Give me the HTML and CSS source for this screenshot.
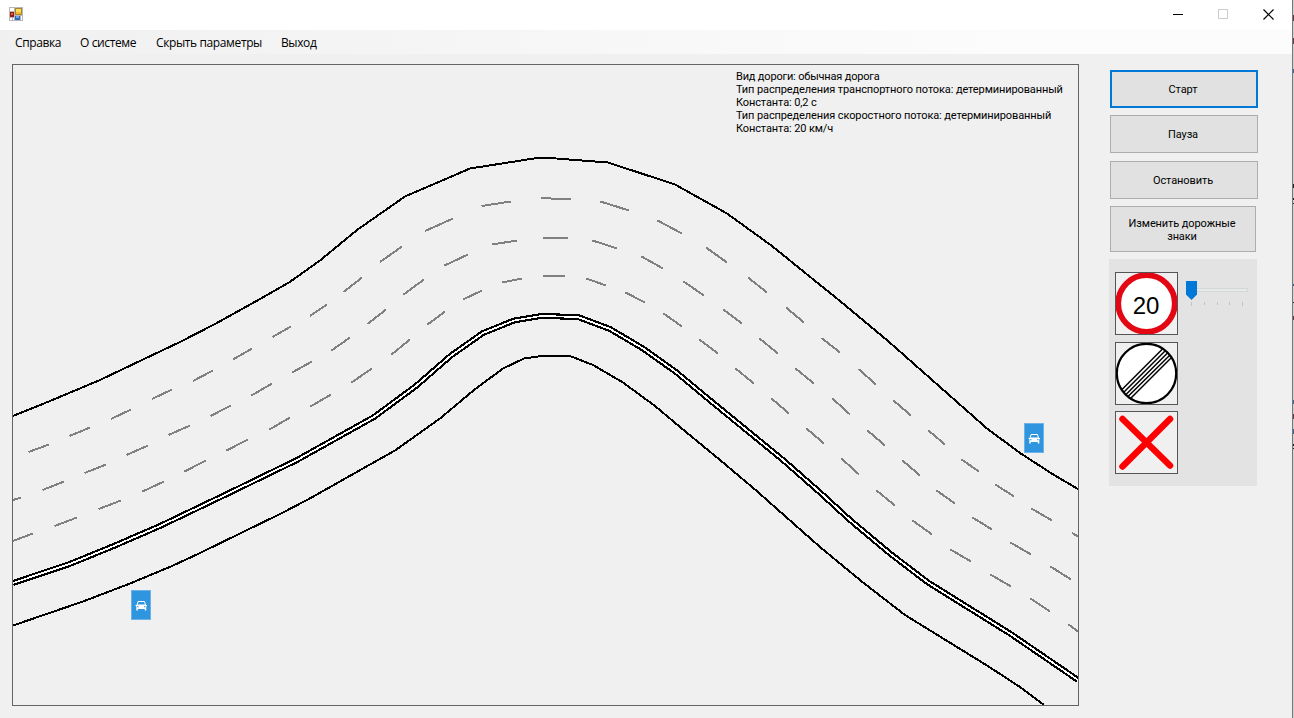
FILE: index.html
```
<!DOCTYPE html>
<html lang="ru">
<head>
<meta charset="utf-8">
<title>Моделирование движения</title>
<link rel="stylesheet" href="styles.css">
</head>
<body>
<div class="desktop">
<div class="window">
  <header class="titlebar">
    <svg class="app-icon" width="14" height="14" viewBox="0 0 14 14">
      <path fill="#b8b8b8" d="M0 0h14v14H0z"/><path fill="#fff" d="M1 1h4v3H1zM1 11h2v2H1zM4 11h1v2H4zM12 9h1v4h-1z"/>
      <path fill="#a88532" d="M6 1h7v7H6z"/><path fill="#ffdc58" d="M7 2h5v5H7z"/><path fill="#f4bb25" d="M7 5h5v2H7z"/>
      <path fill="#951d13" d="M1 5h4v5H1z"/><path fill="#e55a45" d="M2 6h2v2H2z"/>
      <path fill="#3468b9" d="M6 9h5v4H6z"/><path fill="#70a7ed" d="M7 9h3v2H7z"/>
    </svg>
    <div class="controls">
      <svg width="10" height="10" shape-rendering="crispEdges"><path d="M0 5.5h10" stroke="#000"/></svg>
      <svg width="10" height="10" shape-rendering="crispEdges"><path d="M.5.5h9v9h-9z" fill="none" stroke="#ccc"/></svg>
      <svg width="11" height="11"><path d="M.5.5l10 10M10.500.500l-10 10" stroke="#000" stroke-width="1.2"/></svg>
    </div>
  </header>
  <nav class="menu">
    <span class="m1">Справка</span><span class="m2">О системе</span><span class="m3">Скрыть параметры</span><span class="m4">Выход</span>
  </nav>
  <main class="content">
    <section class="scene">
      <svg class="road" width="1065" height="640" viewBox="13 65 1065 640" fill="none" stroke-width="2" shape-rendering="crispEdges">
        <g stroke="#000">
          <path d="M13 416L50 401 100 380 143 359.500 180 342 215 324 260 299 289 282.500 320 260.500 357 230 405 196.500 470 168.500 537 158 550 158 608 162.500 675 184.500 727 213.500 772 246 809 276 840 301 888 341 987 428.500 1020 453 1054 475 1078 489"/>
          <path d="M13 625.500L83 601.500 130 583.500 172 566 200 553 280 514 308 499.500 378 460 395 450.500 440 418.500 474 390 503 368.500 524 358.500 541 356 570 356 593 365 623 382.500 655 406 686 432 720 460 755 489.500 820 547 863 582.500 905 615 987 665.500 1020 687 1044 705"/>
          <path stroke-width="6" d="M13 583L71 563.500 115 545.500 160 526 228 493.500 297 460 374 417 416 386 451 355.500 483 333 514 320.500 541 316 578 317 610 329 643 348.500 676 372 709 399.500 783 460 820 492.500 850 520 890 553.500 928 582.500 1010 633.500 1078 680"/>
          <path stroke="#fff" stroke-width="1.800" d="M13 583L71 563.500 115 545.500 160 526 228 493.500 297 460 374 417 416 386 451 355.500 483 333 514 320.500 541 316 578 317 610 329 643 348.500 676 372 709 399.500 783 460 820 492.500 850 520 890 553.500 928 582.500 1010 633.500 1078 680"/>
        </g>
        <g stroke="#808080">
          <path d="M28.500 452L49 444.500M69.500 436L90 427.500M111 419L131 409.500M152 399L172 389.500M193 381L213 370.500M233 359.500L252 348.500M272.500 337L291 326.500M310 316L327 304.500M343.500 292L362 277.500M380 262L402 246.500M425 231L453 218.500M481.500 206L511 201.500M541 198L571 199.500M600.500 201.500L629 210.500M657.500 220.500L682 233.500M706 247.500L727 262.500M748 277.500L767 292.500M786 307.500L804 322.500M821.500 338L840 352.500M858.500 369L876 384.500M893.500 400.500L911 415.500M928.500 430.500L945 444.500M961.500 459.500L979 471.500M995.500 484.500L1014 496.500M1031.500 508.500L1052 520.500M1072 533L1078 536.500"/>
          <path d="M13 500L21 497.500M42.500 490L64 481.500M84.500 473L106 464.500M126.500 455L148 445.500M168.500 435L190 425.500M210.500 416L231 405.500M251.500 395.500L272 383.500M292 372.500L312 361.500M331.500 350.500L350 337.500M367.500 324L386 309.500M403.500 294.500L424 279.500M444.500 265.500L468 254.500M492 244.500L517 240.500M542.500 238L568 238M592.500 240.500L617 248.500M641.500 256.500L663 268.500M683.500 281.500L704 295.500M723.500 309.500L742 323.500M759.500 338.500L778 353.500M795.500 368.500L814 383.500M832.500 398.500L850 414.500M867.500 430.500L885 445.500M902.500 460.500L920 475.500M936.500 490.500L955 503.500M972.500 517.500L992 529.500M1010.500 542.500L1031 554.500M1050.500 566.500L1071 579.500"/>
          <path d="M13 541L33 533.500M54.500 526L77 517.500M98.500 509L121 500.500M142.500 491.500L164 481.500M184.500 471.500L206 460.500M226.500 450.500L248 439.500M269.500 429.500L290 417.500M310.500 406.500L331 394.500M351.500 382.500L372 368.500M391.500 354.500L410 339.500M427.500 324.500L445 311.500M463 299.500L482 290.500M502 282.500L522 278.500M542.500 276L565 276M586.500 278.500L606 285.500M625.500 292.500L645 302.500M663.500 313.500L682 326.500M699.500 339.500L718 353.500M735.500 368.500L754 383.500M771.500 398.500L789 413.500M806.500 428.500L824 443.500M841.500 458.500L859 474.500M876.500 490.500L895 505.500M912.500 520.500L932 534.500M950.500 549.500L971 561.500M990.500 574.500L1011 586.500M1030.500 598.500L1050 611.500M1068.500 624.500L1078 631.500"/>
        </g>
        <defs>
          <g id="car" shape-rendering="auto">
            <path fill="#7db9e8" d="M0 0h20v30H0z"/><path fill="#3095df" d="M.8.8h18.400v28.400H.8z"/>
            <path stroke="#fff" stroke-width="1" d="M6 15l1-3.500h6.500l1 3.500"/>
            <path fill="#fff" d="M4.500 15h1.500l.5-.5h7.500l.5.500H16v1h-.7v4.500h-1.500V19H6.800v1.500H5.300V16h-.8z"/>
            <path fill="#3095df" d="M6 16.200h1.500v1H6zM13 16.200h1.500v1H13z"/>
          </g>
        </defs>
        <use href="#car" x="131" y="590"/>
        <use href="#car" x="1024" y="423"/>
      </svg>
      <div class="info">
        <span class="i1">Вид дороги: обычная дорога</span>
        <span class="i2">Тип распределения транспортного потока: детерминированный</span>
        <span class="i3">Константа: 0,2 с</span>
        <span class="i4">Тип распределения скоростного потока: детерминированный</span>
        <span class="i5">Константа: 20 км/ч</span>
      </div>
    </section>
    <aside class="side">
      <button class="btn primary">Старт</button>
      <button class="btn">Пауза</button>
      <button class="btn stop">Остановить</button>
      <button class="btn signs-btn">Изменить дорожные знаки</button>
      <div class="signs">
        <div class="sign-list">
          <svg class="sign" width="61" height="61" viewBox="0 0 61 61"><circle cx="30.500" cy="30.500" r="28.300" fill="#fff" stroke="#e30613" stroke-width="5.800"/><text x="30" y="41" text-anchor="middle" class="limit">20</text></svg>
          <svg class="sign s2" width="61" height="61" viewBox="0 0 61 61"><circle cx="30.500" cy="30.500" r="29.700" fill="#fff" stroke="#000" stroke-width="2.200"/><path stroke="#000" stroke-width="1.500" d="M5.500 47L46.500 6M7.500 49.500L49 8M10 51.500L51.500 10M12 53.500L53.500 12.500M14.500 55.500L55.500 14.500"/></svg>
          <svg class="sign" width="61" height="61" viewBox="0 0 61 61"><path stroke="#f00" stroke-width="6.500" stroke-linecap="round" d="M6.500 7L54 53.500M54 7L6.500 54.500"/></svg>
        </div>
        <svg class="slider" width="64" height="26" viewBox="0 0 64 26" shape-rendering="crispEdges">
          <path d="M2.500 7.500h59v3h-59z" fill="#e7eaea" stroke="#d6d6d6"/>
          <path d="M5.500 21v4M18.500 21v3M31.500 21v3M43.500 21v3M56.500 21v4" stroke="#c4c4c4"/>
          <path shape-rendering="auto" fill="#0078d7" d="M0 0h11v13.500L5.500 19 0 13.500z"/>
        </svg>
      </div>
    </aside>
  </main>
</div>
<svg class="edge" width="2" height="718" shape-rendering="crispEdges">
  <path fill="#777" d="M0 0h1v718H0z"/><path fill="#d0d0d0" d="M1 0h1v718H1z"/>
  <path fill="#643947" d="M1 15h1v6H1zM1 38h1v6H1zM1 316h1v4H1zM1 414h1v5H1z"/>
  <path fill="#3e638e" d="M1 69h1v4H1zM1 284h1v2H1zM1 400h1v4H1zM1 429h1v5H1z"/>
  <path fill="#222" d="M1 184h1v4H1zM1 198h1v2H1zM1 203h1v1H1zM1 302h1v1H1zM1 444h1v2H1zM1 448h1v1H1z"/>
</svg>
</div>
</body>
</html>
```
FILE: styles.css
```
* { box-sizing: border-box; }
body { margin: 0; background: #f0f0f0; color: #000; overflow: hidden; }
.desktop { display: flex; width: 1294px; height: 718px; }
.window { width: 1292px; height: 718px; background: #f0f0f0; }
.edge { display: block; flex: none; }
.titlebar { height: 30px; background: #fff; display: flex; justify-content: space-between; padding: 7px 18px 0 9px; }
.app-icon { display: block; }
.controls { display: flex; gap: 35px; padding-top: 2px; }
.controls svg { display: block; }
.menu { height: 24px; display: flex; gap: 19px; padding-left: 15px; font: 12px/25px "Open Sans", "Noto Sans", sans-serif; background: linear-gradient(90deg, #f0f0f0, #fcfcfc 80%); white-space: nowrap; }
.m1 { width: 46px; }
.m2 { width: 57px; }
.m3 { width: 106px; }
.menu span { letter-spacing: -0.38px; }
.content { display: flex; padding: 10px 0 0 12px; font: 11px/13px Roboto, sans-serif; }
.scene { position: relative; width: 1067px; height: 642px; border: 1px solid #646464; flex: none; }
.road { display: block; }
.info { position: absolute; left: 723px; top: 5px; display: flex; flex-direction: column; white-space: nowrap; letter-spacing: -0.11px; }
.i1 { letter-spacing: -0.18px; }
.side { width: 148px; margin-left: 30px; padding-top: 6px; display: flex; flex-direction: column; align-items: flex-start; }
.btn { width: 148px; height: 38px; margin: 0 0 8px 1px; padding: 0 11px 0 9px; flex: none; font: inherit; letter-spacing: -0.1px; color: #000; background: #e1e1e1; border: 1px solid #adadad; border-radius: 0; }
.primary { border: 2px solid #0078d7; margin-bottom: 7px; }
.stop { margin-bottom: 7px; }
.signs-btn { width: 146px; height: 46px; padding-top: 2px; }
.signs { width: 148px; height: 227px; margin-top: -1px; padding: 13px 0 0 6px; background: #e3e3e3; display: flex; flex: none; gap: 8px; }
.sign-list { display: flex; flex-direction: column; gap: 7px; }
.sign { display: block; box-sizing: content-box; border: 1px solid #555; background: #f0f0f0; }
.s2 { margin-bottom: -1px; }
.limit { font: 24px "Liberation Sans", Arial, sans-serif; }
.slider { display: block; margin-top: 9px; }
```
